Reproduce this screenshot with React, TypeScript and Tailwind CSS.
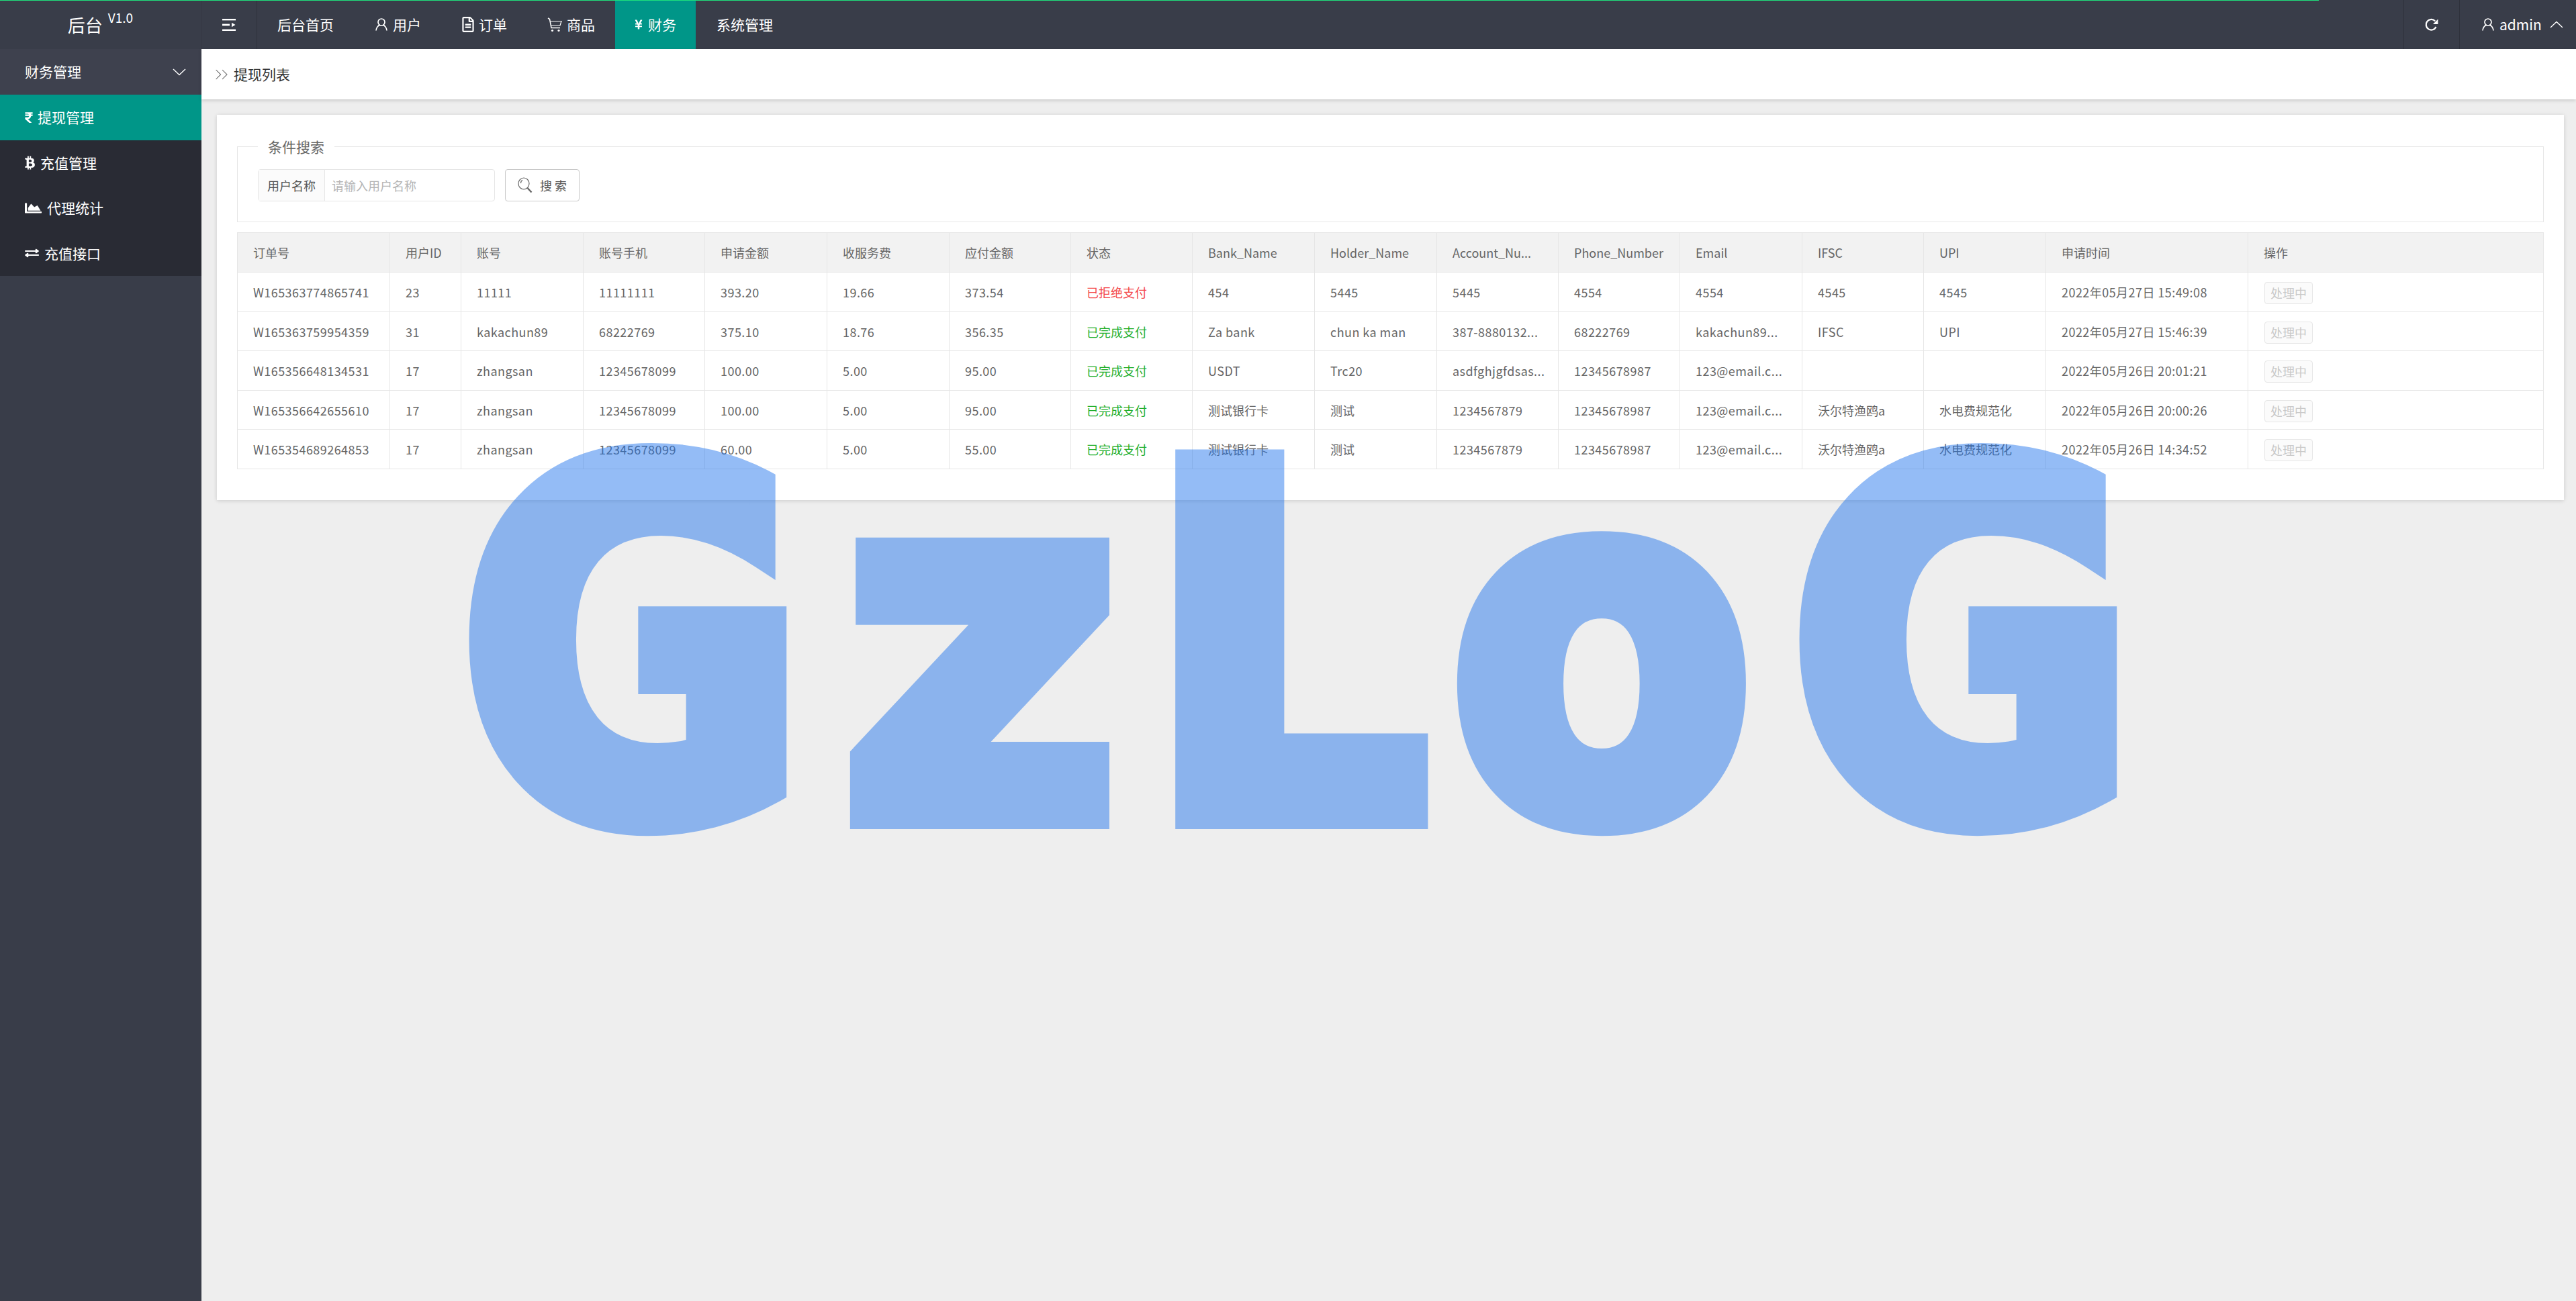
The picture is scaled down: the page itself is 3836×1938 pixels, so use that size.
import { ChevronsRight } from "lucide-react";
import { FaBtc, FaChartArea, FaExchangeAlt, FaRegFileAlt, FaRupeeSign, FaYenSign } from "react-icons/fa";

function ShrinkIcon() {
    return (
        <svg viewBox="0 0 20 18" className="h-[18px] w-5" fill="#fff">
            <rect x="0" y="0" width="20" height="2.4" />
            <rect x="0" y="7.6" width="11" height="2.8" />
            <path d="M14 5.8 L19.5 9 L14 12.2 Z" />
            <rect x="0" y="15.6" width="20" height="2.4" />
        </svg>
    );
}

function UserIcon() {
    return (
        <svg viewBox="0 0 18 19" className="h-[19px] w-[18px]" fill="none" stroke="#fff" strokeWidth="1.7">
            <circle cx="9" cy="6" r="5" />
            <path d="M1 18.5 C1.5 13.5 4.5 10.8 6.5 10.4 M17 18.5 C16.5 13.5 13.5 10.8 11.5 10.4" />
        </svg>
    );
}

function CartIcon() {
    return (
        <svg viewBox="0 0 22 22" className="h-[22px] w-[22px]" fill="none" stroke="#fff" strokeWidth="1.5">
            <path d="M1 1 L3.5 2.5 L6 15.5 H19" />
            <path d="M4.4 5.5 H21 L19 12 H6" strokeWidth="1.2" />
            <circle cx="7.5" cy="19.5" r="1.6" fill="#fff" stroke="none" />
            <circle cx="17" cy="19.5" r="1.6" fill="#fff" stroke="none" />
        </svg>
    );
}

function RefreshIcon() {
    return (
        <svg viewBox="0 0 20 20" className="h-5 w-5" fill="none" stroke="#fff" strokeWidth="2.2">
            <path d="M16.6 13 A7.8 7.8 0 1 1 15.2 4.4" />
            <path d="M19.5 1.5 V9 H12 Z" fill="#fff" stroke="none" />
        </svg>
    );
}

function SearchIcon() {
    return (
        <svg viewBox="0 0 24 24" className="h-6 w-6" fill="none" stroke="#666" strokeWidth="1.2">
            <ellipse cx="9" cy="9.5" rx="8" ry="8.5" />
            <path d="M4.5 9 C4.5 6.5 5.5 5 7 4.2" />
            <path d="M14.5 16 L20.5 22.5" strokeWidth="2.4" />
        </svg>
    );
}

// wide flat caret, the arrow of the layui nav
function Caret({ up }: { up?: boolean }) {
    return (
        <svg viewBox="0 0 20 11" className="h-[11px] w-5" fill="none" stroke="#fff" strokeWidth="1.4">
            <path d={up ? "M1 10 L10 1.5 L19 10" : "M1 1 L10 9.5 L19 1"} />
        </svg>
    );
}

const navItems = [
    { label: "用户", icon: <UserIcon />, gap: "gap-2" },
    { label: "订单", icon: <FaRegFileAlt className="h-[23px] w-5" />, gap: "gap-[6px]" },
    { label: "商品", icon: <CartIcon />, gap: "gap-[7px]" },
];

const subMenu = [
    { label: "提现管理", icon: <FaRupeeSign className="h-[18px] w-[12px]" />, gap: "gap-[7px]", active: true },
    { label: "充值管理", icon: <FaBtc className="h-[21px] w-[15px]" />, gap: "gap-[8px]" },
    { label: "代理统计", icon: <FaChartArea preserveAspectRatio="none" className="h-[20px] w-[25px]" />, gap: "gap-[8px]" },
    { label: "充值接口", icon: <FaExchangeAlt preserveAspectRatio="none" className="h-[16px] w-[21px]" />, gap: "gap-[8px]" },
];

const columns = [
    { title: "订单号", width: "w-[227px]" },
    { title: "用户ID", width: "w-[106px]" },
    { title: "账号", width: "w-[182px]" },
    { title: "账号手机", width: "w-[181px]" },
    { title: "申请金额", width: "w-[182px]" },
    { title: "收服务费", width: "w-[182px]" },
    { title: "应付金额", width: "w-[181px]" },
    { title: "状态", width: "w-[181px]" },
    { title: "Bank_Name", width: "w-[182px]" },
    { title: "Holder_Name", width: "w-[182px]" },
    { title: "Account_Nu...", width: "w-[181px]" },
    { title: "Phone_Number", width: "w-[181px]" },
    { title: "Email", width: "w-[182px]" },
    { title: "IFSC", width: "w-[181px]" },
    { title: "UPI", width: "w-[182px]" },
    { title: "申请时间", width: "w-[301px]" },
    { title: "操作", width: "w-[440px]" },
];

const rows = [
    ["W165363774865741", "23", "11111", "11111111", "393.20", "19.66", "373.54", "已拒绝支付", "454", "5445", "5445", "4554", "4554", "4545", "4545", "2022年05月27日 15:49:08"],
    ["W165363759954359", "31", "kakachun89", "68222769", "375.10", "18.76", "356.35", "已完成支付", "Za bank", "chun ka man", "387-8880132...", "68222769", "kakachun89...", "IFSC", "UPI", "2022年05月27日 15:46:39"],
    ["W165356648134531", "17", "zhangsan", "12345678099", "100.00", "5.00", "95.00", "已完成支付", "USDT", "Trc20", "asdfghjgfdsas...", "12345678987", "123@email.c...", "", "", "2022年05月26日 20:01:21"],
    ["W165356642655610", "17", "zhangsan", "12345678099", "100.00", "5.00", "95.00", "已完成支付", "测试银行卡", "测试", "1234567879", "12345678987", "123@email.c...", "沃尔特渔鸥a", "水电费规范化", "2022年05月26日 20:00:26"],
    ["W165354689264853", "17", "zhangsan", "12345678099", "60.00", "5.00", "55.00", "已完成支付", "测试银行卡", "测试", "1234567879", "12345678987", "123@email.c...", "沃尔特渔鸥a", "水电费规范化", "2022年05月26日 14:34:52"],
];

function cellClass(cell: string, index: number) {
    if (cell === "已拒绝支付") return "text-[#f4474a]";
    if (cell === "已完成支付") return "text-[#1fae2a]";
    // digits and latin run a little wider than the fallback font
    if (index === 15 || !/[\u4e00-\u9fff]/.test(cell)) return "tracking-[0.45px]";
    return "";
}

export default function App() {
    return (
        <div className="relative flex h-screen w-full flex-col overflow-hidden bg-[#eeeeee] font-['Noto_Sans_CJK_SC','Noto_Sans',sans-serif] text-[18px] text-[#666666]">
            {/* Loading bar */}
            <div className="absolute left-0 top-0 z-10 h-px w-[3453px] bg-[#1ee27c]" />

            {/* Top bar */}
            <header className="flex h-[73px] shrink-0 items-stretch bg-[#393d49] text-[21px] text-white">
                <div className="flex w-[300px] items-center justify-center gap-[8px] border-r border-[#343742]">
                    <span className="text-[26px]">后台</span>
                    <span className="mb-[21px] text-[19px]">V1.0</span>
                </div>
                <div className="flex w-[83px] items-center justify-center border-r border-[#2f323c]">
                    <ShrinkIcon />
                </div>
                <nav className="flex items-stretch">
                    <a className="flex items-center pl-[30px] pr-[32px]">后台首页</a>
                    {navItems.map((item) => (
                        <a key={item.label} className={`flex items-center px-[30px] ${item.gap}`}>
                            {item.icon}
                            {item.label}
                        </a>
                    ))}
                    <a className="flex w-[120px] items-center justify-center gap-2 bg-[#009688]">
                        <FaYenSign className="h-[19px] w-3" />
                        财务
                    </a>
                    <a className="flex items-center px-[31px]">系统管理</a>
                </nav>
                <div className="ml-auto flex items-stretch">
                    <div className="flex w-[84px] items-center justify-center border-x border-[#2f323c]">
                        <RefreshIcon />
                    </div>
                    <div className="flex w-[173px] items-center gap-[8px] pl-[33px]">
                        <UserIcon />
                        <span>admin</span>
                        <span className="ml-[4px]">
                            <Caret up />
                        </span>
                    </div>
                </div>
            </header>

            <div className="flex min-h-0 flex-1">
                {/* Sidebar */}
                <aside className="w-[300px] shrink-0 bg-[#393d49] text-[21px] text-white">
                    <div className="flex h-[68px] items-center justify-between bg-[#3e414e] pl-[37px] pr-[23px]">
                        财务管理
                        <Caret />
                    </div>
                    <ul className="bg-[#292b34]">
                        {subMenu.map((item) => (
                            <li
                                key={item.label}
                                className={`flex h-[67.5px] items-center pl-[37px] ${item.gap} ${item.active ? "bg-[#009688]" : ""}`}
                            >
                                {item.icon}
                                {item.label}
                            </li>
                        ))}
                    </ul>
                </aside>

                {/* Main */}
                <main className="min-w-0 flex-1">
                    <div className="flex h-[75px] items-center gap-[2px] bg-white pl-[14px] text-[21px] text-[#333333] shadow-[0_2px_5px_rgba(0,0,0,0.15)]">
                        <ChevronsRight className="h-8 w-8 text-[#777777]" strokeWidth={0.8} />
                        提现列表
                    </div>

                    <div className="ml-[23px] mr-[18px] mt-[23px] bg-white px-[30px] pb-[46px] pt-[35px] shadow-[0_1px_6px_rgba(0,0,0,0.15)]">
                        <fieldset className="h-[125px] border border-[#e6e6e6] pl-[30px]">
                            <legend className="ml-0 px-[15px] text-[21px] leading-[24px]">条件搜索</legend>
                            <div className="mt-[22px] flex gap-[15px]">
                                <div className="flex h-[48px] w-[353px] rounded-sm border border-[#e6e6e6]">
                                    <div className="flex w-[99px] items-center justify-center border-r border-[#e6e6e6] bg-[#fbfbfb] text-[#555555]">
                                        用户名称
                                    </div>
                                    <div className="flex flex-1 items-center pl-[10px] text-[#b5b5b5]">请输入用户名称</div>
                                </div>
                                <button className="flex h-[48px] w-[111px] items-center justify-center gap-[9px] rounded-sm border border-[#c9c9c9] text-[#555555]">
                                    <SearchIcon />
                                    搜 索
                                </button>
                            </div>
                        </fieldset>

                        <table className="mt-[15px] w-[3434px] table-fixed border-collapse border border-[#e6e6e6]">
                            <colgroup>
                                {columns.map((col) => (
                                    <col key={col.title} className={col.width} />
                                ))}
                            </colgroup>
                            <thead>
                                <tr className="h-[59px] bg-[#f2f2f2]">
                                    {columns.map((col) => (
                                        <th key={col.title} className="whitespace-nowrap border border-[#e6e6e6] pl-[23px] text-left font-normal">
                                            {col.title}
                                        </th>
                                    ))}
                                </tr>
                            </thead>
                            <tbody>
                                {rows.map((row) => (
                                    <tr key={row[0]} className="h-[58.5px]">
                                        {row.map((cell, i) => (
                                            <td
                                                key={i}
                                                className={`whitespace-nowrap border border-[#e6e6e6] pl-[23px] pt-[2px] ${cellClass(cell, i)}`}
                                            >
                                                {cell}
                                            </td>
                                        ))}
                                        <td className="border border-[#e6e6e6] pl-[24px]">
                                            <span className="mt-[4px] flex h-[33px] w-[72px] items-center justify-center rounded-sm border border-[#e6e6e6] bg-[#fbfbfb] text-[#c9c9c9]">
                                                处理中
                                            </span>
                                        </td>
                                    </tr>
                                ))}
                            </tbody>
                        </table>
                    </div>
                </main>
            </div>

            {/* Watermark */}
            <div className="pointer-events-none absolute left-[676px] top-[605px] z-20 flex font-['DejaVu_Sans_Condensed','DejaVu_Sans',sans-serif] text-[721px] font-bold leading-none font-stretch-condensed text-[#1e73ec] opacity-[0.47] [-webkit-text-stroke:40px_#1e73ec]">
                <span className="scale-x-[0.96]">G</span>
                <span className="ml-[63px] scale-x-[1.08]">z</span>
                <span className="ml-[62px]">L</span>
                <span className="ml-[38px]">o</span>
                <span className="ml-[49px] scale-x-[0.96]">G</span>
            </div>
        </div>
    );
}
